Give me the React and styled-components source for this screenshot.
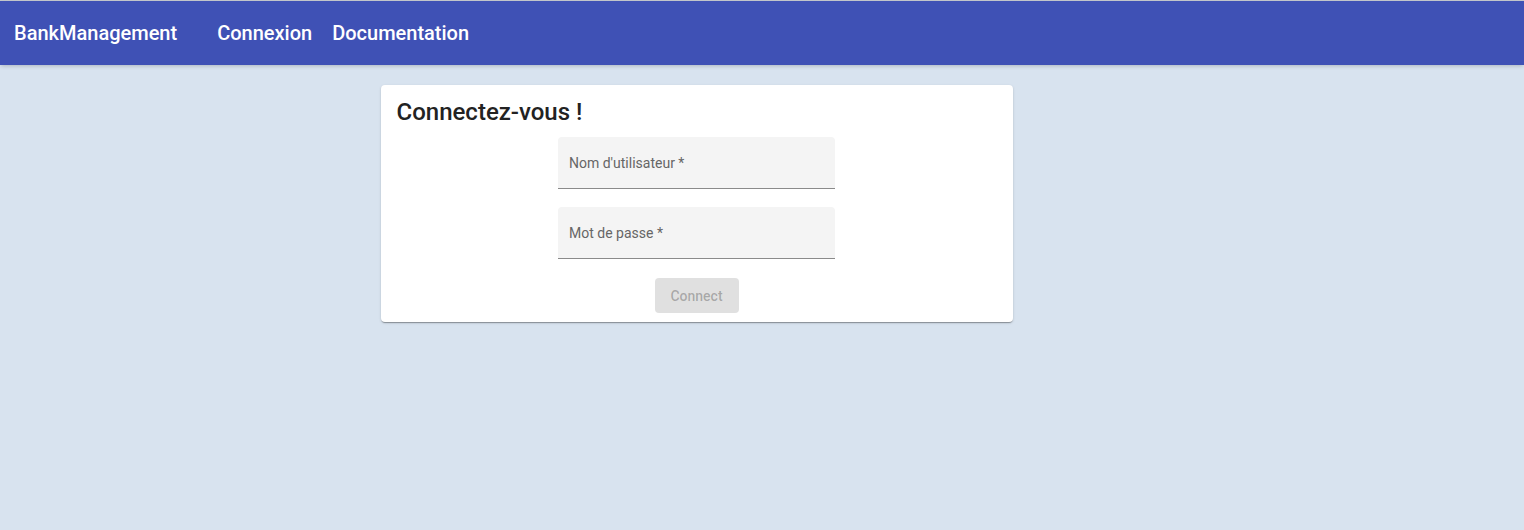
import React from 'react';
import styled, { createGlobalStyle } from 'styled-components';

const GlobalStyle = createGlobalStyle`
  body {
    margin: 0;
    font-family: Roboto, 'Liberation Sans', sans-serif;
    background: #d8e3ef;
  }
`

const Page = styled.div`
  min-height: 100vh;
  border-top: 1px solid #c4c7cc;
  box-sizing: border-box;
`

const AppBar = styled.header`
  height: 64px;
  background: #3f51b5;
  display: flex;
  align-items: center;
  padding: 0 14px;
  box-shadow: 0 2px 4px -1px rgba(0,0,0,0.2);
`

const Brand = styled.div`
  color: #fff;
  font-size: 20px;
  font-weight: 500;
  margin-right: 40px;
`

const NavLink = styled.a`
  color: #fff;
  font-size: 20px;
  font-weight: 500;
  margin-right: 20px;
  text-decoration: none;
`

const Main = styled.main`
  display: flex;
  justify-content: center;
  padding-top: 20px;
`

const Card = styled.section`
  width: 632px;
  background: #fff;
  border-radius: 4px;
  box-shadow: 0 2px 1px -1px rgba(0,0,0,0.2), 0 1px 1px 0 rgba(0,0,0,0.14), 0 1px 3px 0 rgba(0,0,0,0.12);
  padding: 12px 16px 9px;
  box-sizing: border-box;
  margin-right: 131px;
`

const Title = styled.h2`
  margin: 0;
  font-size: 24px;
  font-weight: 500;
  color: #222;
  line-height: 30px;
`

const Form = styled.form`
  display: flex;
  flex-direction: column;
  align-items: center;
  gap: 18px;
  margin-top: 10px;
`

const Field = styled.div`
  width: 277px;
  height: 52px;
  background: #f4f4f4;
  border-radius: 4px 4px 0 0;
  border-bottom: 1px solid #8a8a8a;
  box-sizing: border-box;
  display: flex;
  align-items: center;
  padding: 0 11px;
  font-size: 14px;
  color: #666;
`

const Button = styled.button`
  width: 84px;
  height: 35px;
  border: 0;
  border-radius: 4px;
  background: #e0e0e0;
  color: rgba(0,0,0,0.26);
  font-family: inherit;
  font-size: 14px;
  font-weight: 500;
  margin-top: 1px;
`

export default function App() {
  return (
    <Page>
      <GlobalStyle />
      <AppBar>
        <Brand>BankManagement</Brand>
        <NavLink>Connexion</NavLink>
        <NavLink>Documentation</NavLink>
      </AppBar>
      <Main>
        <Card>
          <Title>Connectez-vous !</Title>
          <Form>
            <Field>Nom d'utilisateur *</Field>
            <Field>Mot de passe *</Field>
            <Button type="button" disabled>Connect</Button>
          </Form>
        </Card>
      </Main>
    </Page>
  );
}
